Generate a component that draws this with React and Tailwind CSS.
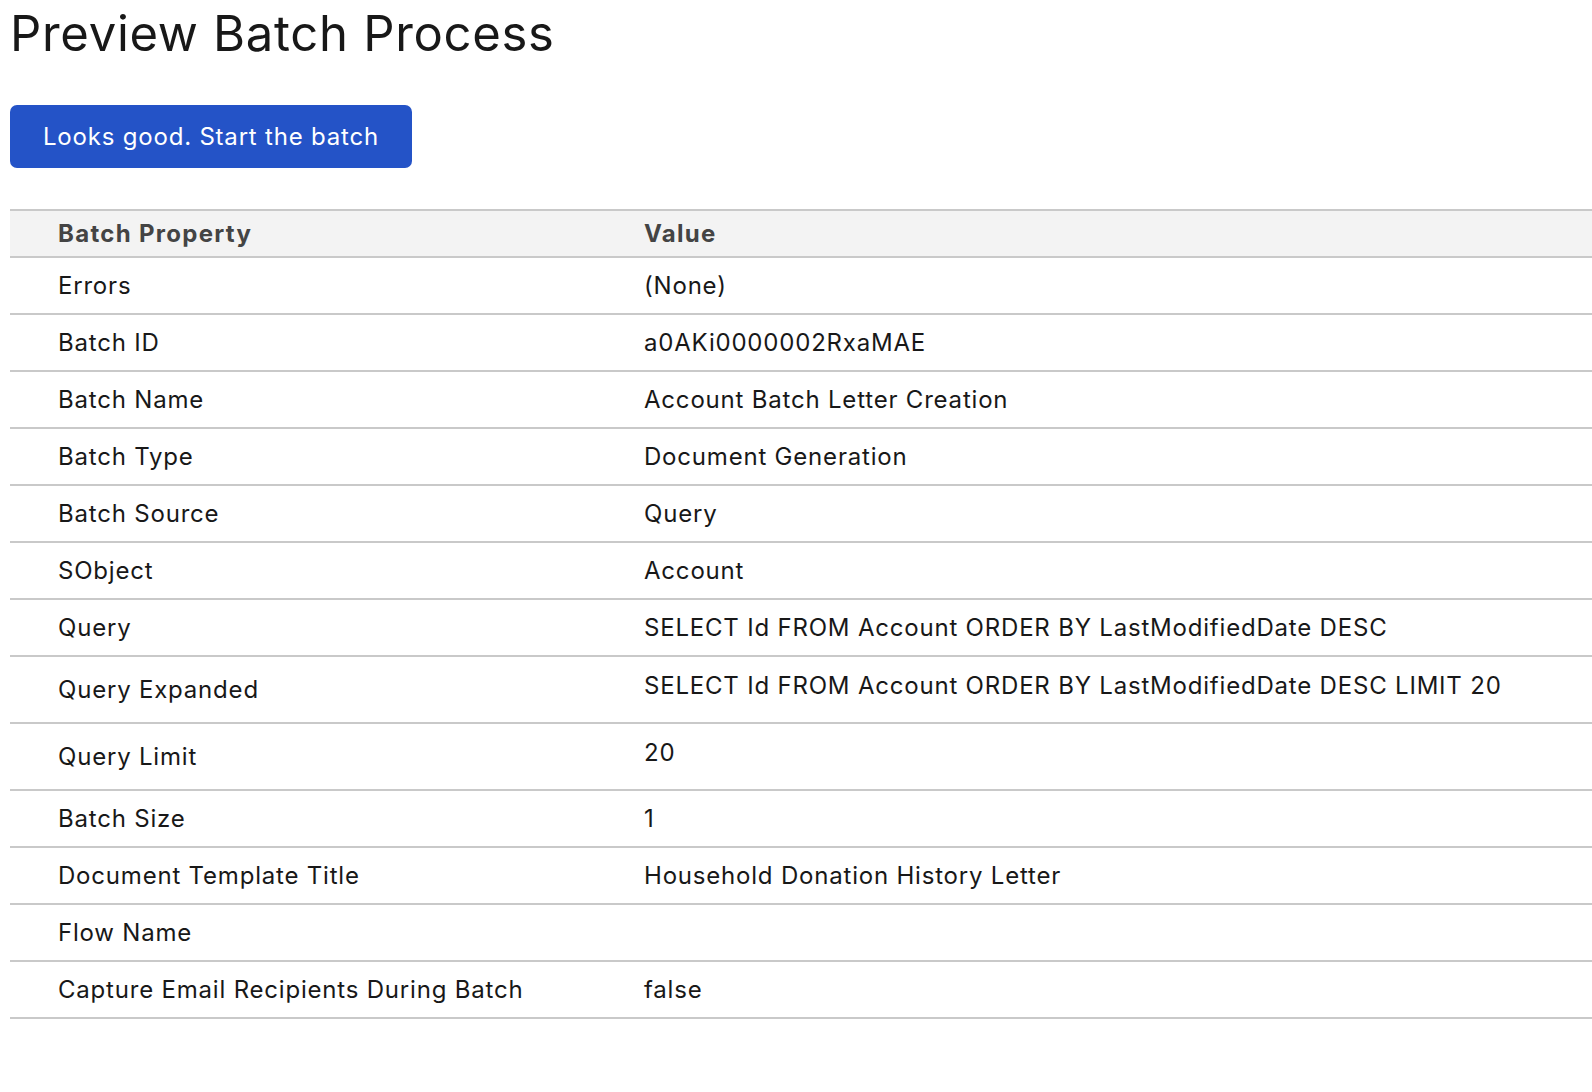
const rows = [
  { label: "Errors", value: "(None)" },
  { label: "Batch ID", value: "a0AKi0000002RxaMAE" },
  { label: "Batch Name", value: "Account Batch Letter Creation" },
  { label: "Batch Type", value: "Document Generation" },
  { label: "Batch Source", value: "Query" },
  { label: "SObject", value: "Account" },
  { label: "Query", value: "SELECT Id FROM Account ORDER BY LastModifiedDate DESC" },
  { label: "Query Expanded", value: "SELECT Id FROM Account ORDER BY LastModifiedDate DESC LIMIT 20", tall: true },
  { label: "Query Limit", value: "20", tall: true },
  { label: "Batch Size", value: "1" },
  { label: "Document Template Title", value: "Household Donation History Letter" },
  { label: "Flow Name", value: "" },
  { label: "Capture Email Recipients During Batch", value: "false" },
];

export default function App() {
  return (
    <div className="min-h-screen bg-white pl-[10px] font-['Inter',sans-serif] text-[#181818]">
      <h1 className="pt-[4px] text-[49px] leading-[60px] tracking-[0.7px]">Preview Batch Process</h1>

      <button className="mt-[41px] h-[63px] rounded-[7px] bg-[#2453c7] px-[33px] text-[24px] tracking-[0.8px] text-white">
        Looks good. Start the batch
      </button>

      <table className="mt-[41px] w-full table-fixed border-collapse text-[24px] tracking-[0.8px]">
        <colgroup>
          <col className="w-[634px]" />
          <col />
        </colgroup>
        <thead>
          <tr className="border-y-2 border-[#c9c9c9] bg-[#f3f3f3] text-left">
            <th className="h-[47px] pl-[48px] font-bold tracking-[1.3px] text-[#444444]">Batch Property</th>
            <th className="h-[47px] font-bold tracking-[1.3px] text-[#444444]">Value</th>
          </tr>
        </thead>
        <tbody>
          {rows.map((r) => (
            <tr key={r.label} className="border-b-2 border-[#c9c9c9]">
              <td className={`${r.tall ? "h-[67px]" : "h-[57px]"} pl-[48px] align-middle`}>{r.label}</td>
              <td className={r.tall ? "h-[67px] pt-[11px] align-top" : "h-[57px] align-middle"}>{r.value}</td>
            </tr>
          ))}
        </tbody>
      </table>
    </div>
  );
}
